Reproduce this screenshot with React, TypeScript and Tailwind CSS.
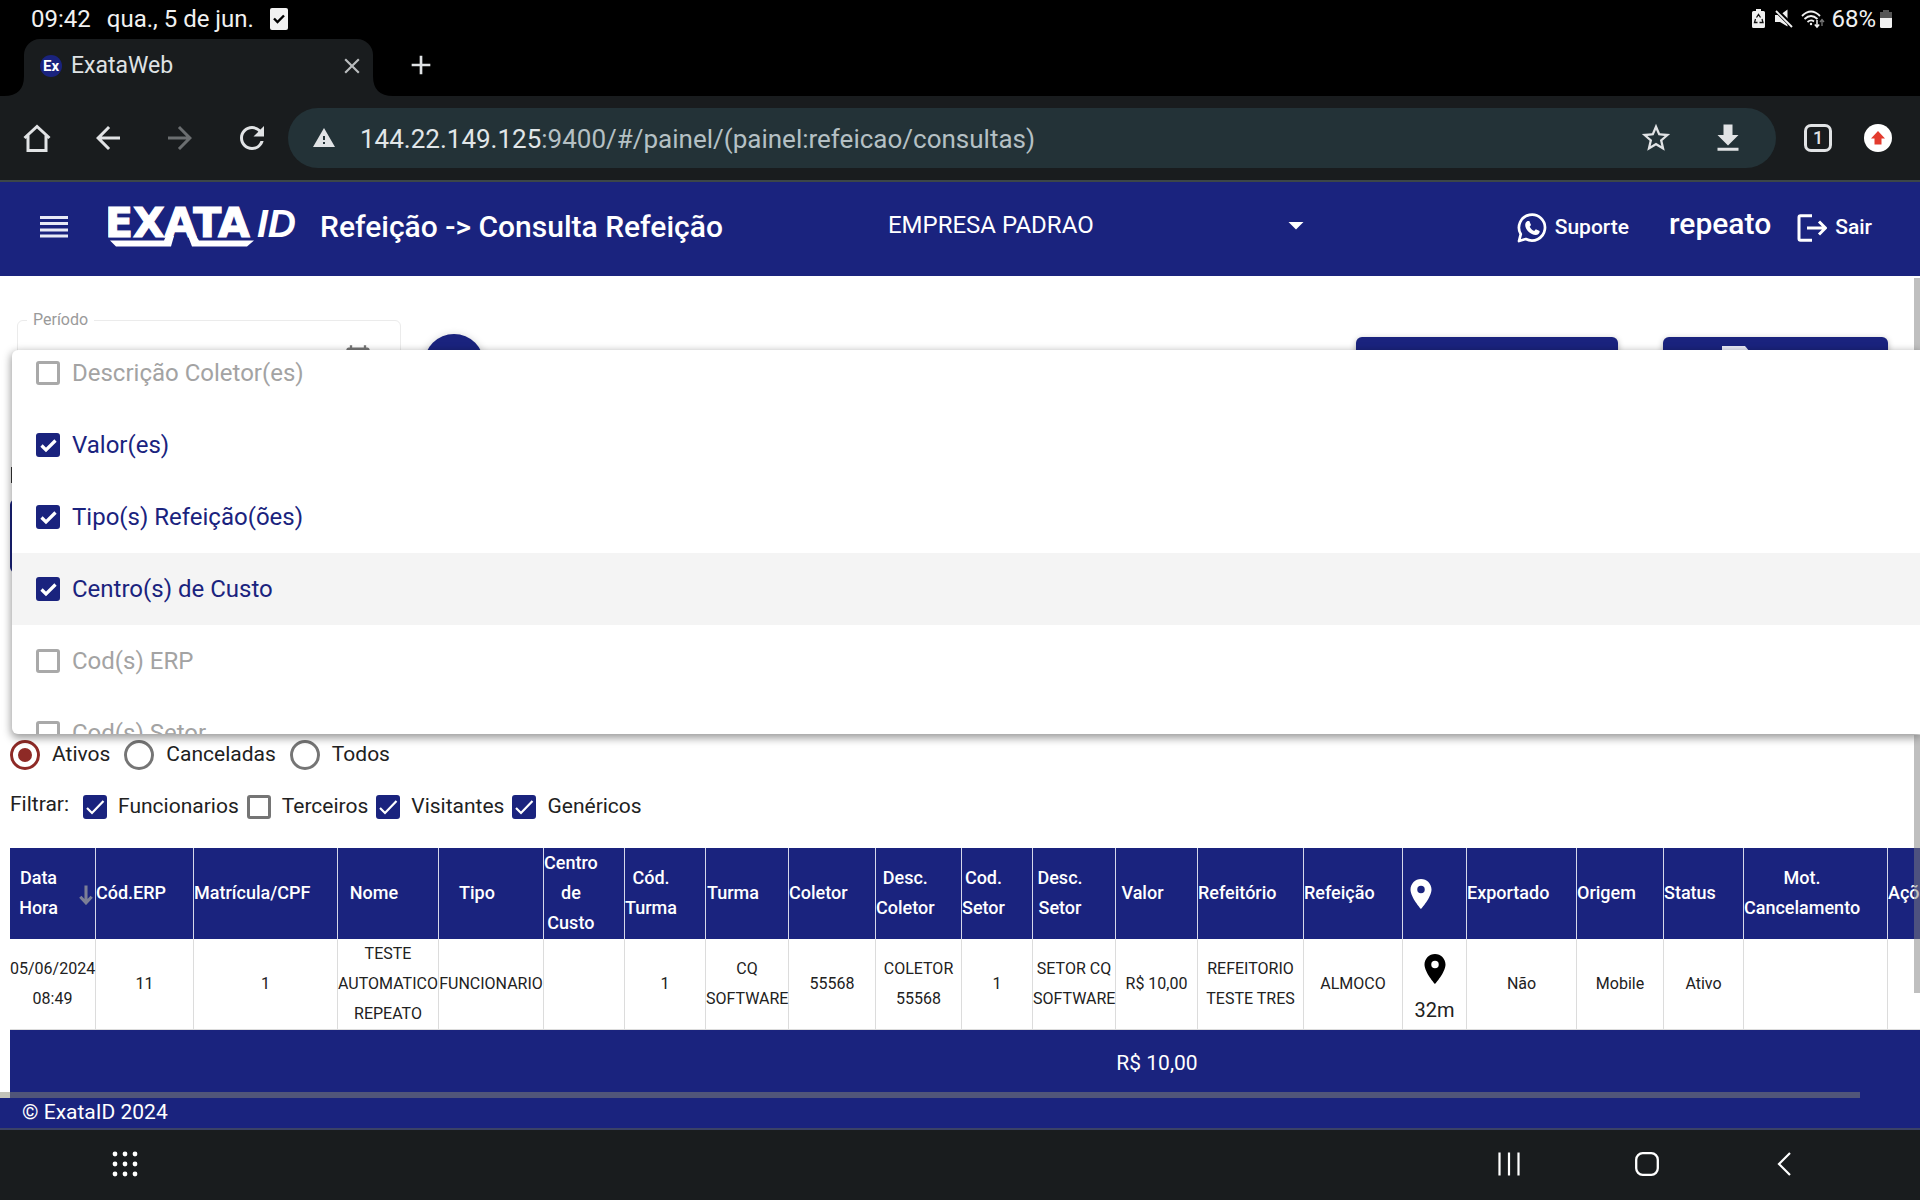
import React from "react";
import {
  MdArrowBack,
  MdArrowForward,
  MdRefresh,
  MdWarning,
  MdStarBorder,
  MdLocationOn,
  MdClose,
  MdAdd,
  MdArrowDropDown,
  MdCalendarToday,
} from "react-icons/md";

function StatusBar() {
  return (
    <div className="flex h-[39px] items-center bg-black pr-7 pb-[2px] pl-[31px] text-2xl leading-9 text-[#f1f1f1]">
      <span>09:42</span>
      <span className="ml-4">qua., 5 de jun.</span>
      <svg viewBox="0 0 18 22" className="ml-4 h-[22px] w-[18px]" aria-hidden="true">
        <rect width="18" height="22" rx="2" fill="#f1f1f1" />
        <path d="M4 10.5l3.5 3.5L14 7.500" fill="none" stroke="#000" strokeWidth="2.400" />
      </svg>
      <div className="ml-auto flex items-center">
        <svg viewBox="0 0 13 19" className="h-[19px] w-[13px]" aria-hidden="true">
          <path d="M4 0h5v2h2.500Q13 2 13 3.500v14Q13 19 11.500 19h-10Q0 19 0 17.500v-14Q0 2 1.500 2H4z" fill="#f1f1f1" />
          <path d="M4.500 8.500L6.500 5.500L8.500 8.500M10 10l1 3.500H7.500M5.500 13.500H2.500L3.500 10" fill="none" stroke="#111" strokeWidth="1.300" />
        </svg>
        <svg viewBox="0 0 18 19" className="ml-[10px] h-[19px] w-[18px]" aria-hidden="true">
          <path d="M0 6h5L12.500 0.500v17L5 13H0z" fill="#f1f1f1" />
          <path d="M0.500 0.500L17.500 17.500" stroke="#000" strokeWidth="4.500" />
          <path d="M1 2L17 18" stroke="#f1f1f1" strokeWidth="1.900" />
        </svg>
        <svg viewBox="0 0 24 20" className="ml-2 h-5 w-6" fill="none" stroke="#f1f1f1" strokeWidth="1.800" aria-hidden="true">
          <path d="M1 7Q10 -2 19 7M3.500 10Q10 4 16.500 10M6.500 13Q10 10 13 12.500" />
          <circle cx="10" cy="15" r="1.200" fill="#f1f1f1" stroke="none" />
          <path d="M16 11v7M13.800 15.500l2.200 2.500 2.200-2.500" strokeWidth="1.500" />
          <path d="M21 17v-6M19 13l2-2.500 2 2.500" stroke="#777" strokeWidth="1.300" />
        </svg>
        <span className="ml-[6px]">68%</span>
        <svg viewBox="0 0 12 18" className="ml-1 h-[18px] w-3" aria-hidden="true">
          <path d="M3 0h6v2h3v6H0V2h3z" fill="#555" />
          <path d="M0 8h12v8.500Q12 18 10.500 18h-9Q0 18 0 16.500z" fill="#f1f1f1" />
        </svg>
      </div>
    </div>
  );
}

function TabStrip() {
  return (
    <div className="flex h-[57px] bg-black">
      <svg viewBox="0 0 24 57" className="h-[57px] w-6 shrink-0" aria-hidden="true">
        <path d="M24 37Q24 57 4 57H24z" fill="#191c1e" />
      </svg>
      <div className="flex w-[349px] items-center rounded-t-2xl bg-[#191c1e] pr-2 pb-[3px] pl-4 text-[#dfe2e4]">
        <span className="flex size-[22px] items-center justify-center rounded-full bg-[#1a237e] text-[15px] font-bold text-white">Ex</span>
        <span className="ml-[9px] text-[23px]">ExataWeb</span>
        <button aria-label="Fechar guia" className="ml-auto">
          <MdClose className="size-[26px] text-[#b9bcbe]" />
        </button>
      </div>
      <svg viewBox="0 0 20 57" className="h-[57px] w-5 shrink-0" aria-hidden="true">
        <path d="M0 37Q0 57 20 57H0z" fill="#191c1e" />
      </svg>
      <button aria-label="Nova guia" className="ml-3 pb-[6px] text-[#dfe2e4]">
        <MdAdd className="size-8" />
      </button>
    </div>
  );
}

function Toolbar() {
  return (
    <div className="flex h-[86px] items-center border-b-2 border-[#3c4648] bg-[#191c1e] pr-7 pl-5 text-[#e1e3e5]">
      <button aria-label="Página inicial">
        <svg viewBox="0 0 34 34" className="size-[34px]" fill="none" stroke="currentColor" strokeWidth="3" aria-hidden="true">
          <path d="M4.500 17L17 5.500L29.500 17M8 14.500V29.500H26V14.500" />
        </svg>
      </button>
      <button aria-label="Voltar" className="ml-9">
        <MdArrowBack className="size-9" />
      </button>
      <button aria-label="Avançar" className="ml-9 text-[#6b6e70]">
        <MdArrowForward className="size-9" />
      </button>
      <button aria-label="Recarregar" className="ml-9">
        <MdRefresh className="size-9" />
      </button>
      <div className="ml-[18px] flex h-[60px] flex-1 items-center rounded-full bg-[#233237] pr-[30px] pl-6">
        <MdWarning className="size-6 shrink-0" />
        <p className="ml-6 flex-1 pt-[2px] text-[26px] text-[#b5c0c4]">
          <span className="text-[#e1e6e8]">144.22.149.125</span>:9400/#/painel/(painel:refeicao/consultas)
        </p>
        <button aria-label="Adicionar aos favoritos">
          <MdStarBorder className="size-[34px]" />
        </button>
        <button aria-label="Baixar" className="ml-[37px]">
          <svg viewBox="0 0 24 24" className="size-9" fill="currentColor" aria-hidden="true">
            <path d="M19 10h-4V3H9v7H5l7 7 7-7zM5 18.500v2h14v-2z" />
          </svg>
        </button>
      </div>
      <button aria-label="Guias abertas" className="ml-7 flex size-7 items-center justify-center rounded-[7px] border-[3px] border-[#e1e3e5] text-lg leading-5 font-medium">
        1
      </button>
      <button aria-label="Atualização disponível" className="ml-8 flex size-7 items-center justify-center rounded-full bg-white">
        <svg viewBox="0 0 14 14" className="size-[14px]" fill="#e33b2e" aria-hidden="true">
          <path d="M7 0l7 7.500h-3.500V13.500h-7V7.500H0z" />
        </svg>
      </button>
    </div>
  );
}

function Logo() {
  return (
    <svg viewBox="0 0 190 42" className="ml-10 h-[42px] w-[190px] shrink-0" role="img" aria-label="EXATAID">
      <text x="-3" y="31" fill="#fff" stroke="#fff" strokeWidth="1.200" fontFamily="DejaVu Sans" fontWeight="700" fontSize="41">EXATA</text>
      <text x="149" y="31" fill="#fff" fontFamily="Liberation Sans" fontWeight="700" fontStyle="italic" fontSize="39">ID</text>
      <path d="M2 34.500H56L58 30H66L63 40.500H8z" fill="#fff" />
      <path d="M80 30H88L91 34.500H146L139 40.500H84z" fill="#fff" />
    </svg>
  );
}

function AppHeader() {
  return (
    <header className="flex h-[94px] items-center bg-[#1a237e] pr-12 pb-1 pl-10 text-white">
      <button aria-label="Menu">
        <svg viewBox="0 0 28 22" className="h-[22px] w-7" fill="#e8eaf6" aria-hidden="true">
          <path d="M0 0h28v3H0zM0 6h28v3H0zM0 12.500h28v3H0zM0 18.500h28v3H0z" />
        </svg>
      </button>
      <Logo />
      <h1 className="ml-[22px] text-3xl leading-9 font-medium">Refeição -&gt; Consulta Refeição</h1>
      <div className="relative ml-[165px] w-[422px]">
        <select aria-label="Empresa" className="h-9 w-full appearance-none bg-transparent pb-1 text-2xl text-white">
          <option>EMPRESA PADRAO</option>
        </select>
        <MdArrowDropDown className="pointer-events-none absolute -top-0.5 -right-1 size-9" />
      </div>
      <a href="#suporte" className="ml-auto flex items-center pt-[2px] text-[21px] font-medium">
        <svg viewBox="0 0 30 30" className="size-[30px]" aria-hidden="true">
          <path d="M2 28l1.800-6.800A13 13 0 1 1 8.800 26z" fill="none" stroke="#fff" strokeWidth="2.700" strokeLinejoin="round" />
          <path d="M10.500 8h1.800l1.700 4-1.300 1.800c1 2 2.300 3.200 4.500 4.200l1.600-1.800 3.900 1.900c0 2.500-1.800 3.900-4 3.900-5 0-10.500-5.500-10.500-10 0-1.700.9-3.300 2.300-4z" fill="#fff" />
        </svg>
        <span className="ml-2">Suporte</span>
      </a>
      <span className="ml-10 pb-[6px] text-3xl leading-9 font-medium">repeato</span>
      <a href="#sair" className="ml-[26px] flex items-center pt-[2px] text-[21px] font-medium">
        <svg viewBox="0 0 30 28" className="h-7 w-[30px]" fill="none" stroke="#fff" strokeWidth="3" aria-hidden="true">
          <path d="M15 1.800H3.500Q2 1.800 2 3.300V24.700Q2 26.200 3.500 26.200H15M10 14H28M22 7.500L28.500 14L22 20.500" />
        </svg>
        <span className="ml-2">Sair</span>
      </a>
    </header>
  );
}

const options = [
  { label: "Descrição Coletor(es)", checked: false },
  { label: "Valor(es)", checked: true },
  { label: "Tipo(s) Refeição(ões)", checked: true },
  { label: "Centro(s) de Custo", checked: true, active: true },
  { label: "Cod(s) ERP", checked: false },
  { label: "Cod(s) Setor", checked: false },
];

function ColumnPicker() {
  return (
    <div className="absolute top-[74px] right-0 left-3 flex h-96 flex-col overflow-hidden rounded-l-md bg-white shadow-[0_3px_8px_1px_rgba(0,0,0,0.4)]">
      <div className="-mt-[13px]">
        {options.map((o) => (
          <label
            key={o.label}
            className={`flex h-[72px] items-center pl-6 text-2xl ${o.active ? "bg-[#f4f4f4]" : ""} ${o.checked ? "text-[#1a237e]" : "text-[#a3a3a3]"}`}
          >
            <span className="relative flex size-6">
              <input
                type="checkbox"
                defaultChecked={o.checked}
                className="peer size-6 appearance-none rounded-[3px] border-[3px] border-[#a9a9a9] checked:border-[#1a237e] checked:bg-[#1a237e]"
              />
              <svg viewBox="0 0 24 24" className="pointer-events-none absolute inset-0 hidden peer-checked:block" aria-hidden="true">
                <path d="M5.500 12.500l4.500 4.500L19.500 7.500" fill="none" stroke="#fff" strokeWidth="3.200" />
              </svg>
            </span>
            <span className="ml-3">{o.label}</span>
          </label>
        ))}
      </div>
    </div>
  );
}

function Status({ label, checked = false }: { label: string; checked?: boolean }) {
  return (
    <label className="flex items-center">
      <span className="relative flex size-[30px]">
        <input
          type="radio"
          name="status"
          defaultChecked={checked}
          className="peer size-[30px] appearance-none rounded-full border-[3px] border-[#757575] checked:border-[#8e2a26]"
        />
        <span className="pointer-events-none absolute inset-2 hidden rounded-full bg-[#8e2a26] peer-checked:block" />
      </span>
      <span className="ml-3 pb-[2px]">{label}</span>
    </label>
  );
}

function Filter({ label, checked = false }: { label: string; checked?: boolean }) {
  return (
    <label className="flex items-center">
      <span className="relative flex size-6">
        <input
          type="checkbox"
          defaultChecked={checked}
          className="peer size-6 appearance-none rounded-[3px] border-[3px] border-[#757575] checked:border-[#1a237e] checked:bg-[#1a237e]"
        />
        <svg viewBox="0 0 24 24" className="pointer-events-none absolute inset-0 hidden peer-checked:block" aria-hidden="true">
          <path d="M4 13l5 5L20.500 6" fill="none" stroke="#fff" strokeWidth="2.200" />
        </svg>
      </span>
      <span className="ml-[11px] pb-[2px]">{label}</span>
    </label>
  );
}

const columns: { w: number; head: string[]; cell: string[]; total?: string }[] = [
  { w: 86, head: ["Data", "Hora"], cell: ["05/06/2024", "08:49"] },
  { w: 98, head: ["Cód.ERP"], cell: ["11"] },
  { w: 144, head: ["Matrícula/CPF"], cell: ["1"] },
  { w: 101, head: ["Nome"], cell: ["TESTE", "AUTOMATICO", "REPEATO"] },
  { w: 105, head: ["Tipo"], cell: ["FUNCIONARIO"] },
  { w: 81, head: ["Centro", "de", "Custo"], cell: [] },
  { w: 81, head: ["Cód.", "Turma"], cell: ["1"] },
  { w: 83, head: ["Turma"], cell: ["CQ", "SOFTWARE"] },
  { w: 87, head: ["Coletor"], cell: ["55568"] },
  { w: 86, head: ["Desc.", "Coletor"], cell: ["COLETOR", "55568"] },
  { w: 71, head: ["Cod.", "Setor"], cell: ["1"] },
  { w: 83, head: ["Desc.", "Setor"], cell: ["SETOR CQ", "SOFTWARE"] },
  { w: 82, head: ["Valor"], cell: ["R$ 10,00"], total: "R$ 10,00" },
  { w: 106, head: ["Refeitório"], cell: ["REFEITORIO", "TESTE TRES"] },
  { w: 99, head: ["Refeição"], cell: ["ALMOCO"] },
  { w: 64, head: ["pin"], cell: ["32m"] },
  { w: 110, head: ["Exportado"], cell: ["Não"] },
  { w: 87, head: ["Origem"], cell: ["Mobile"] },
  { w: 80, head: ["Status"], cell: ["Ativo"] },
  { w: 144, head: ["Mot.", "Cancelamento"], cell: [] },
  { w: 78, head: ["Ações"], cell: [] },
];

function Lines({ items }: { items: string[] }) {
  return (
    <>
      {items.map((t) => (
        <span key={t} className="block whitespace-nowrap">
          {t}
        </span>
      ))}
    </>
  );
}

function MealsTable() {
  return (
    <div className="mt-7 ml-[10px] overflow-hidden">
      <table className="w-[1956px] table-fixed border-separate border-spacing-0 text-center">
        <colgroup>
          {columns.map((c) => (
            <col key={c.head.join()} style={{ width: c.w }} />
          ))}
        </colgroup>
        <thead>
          <tr className="h-[91px] bg-[#1a237e] text-lg leading-[30px] font-medium text-white">
            {columns.map((c, i) => (
              <th key={c.head.join()} scope="col" className="border-r border-[#d5d7ea] p-0 font-medium">
                {c.head[0] === "pin" ? (
                  <MdLocationOn className="size-9" title="Localização" />
                ) : (
                  <div className="-mt-[2px] flex items-center">
                    <div className={i === 0 ? "flex-1" : "flex-1 pr-7"}>
                      <Lines items={c.head} />
                    </div>
                    {i === 0 && (
                      <svg viewBox="0 0 16 22" className="mt-1 mr-[2px] ml-3 h-5 w-[14px]" fill="none" stroke="#7c7f96" strokeWidth="3.500" aria-hidden="true">
                        <path d="M8 0V20M1.500 13L8 20L14.500 13" />
                      </svg>
                    )}
                  </div>
                )}
              </th>
            ))}
          </tr>
        </thead>
        <tbody>
          <tr className="h-[91px] text-base leading-[30px] text-[#212121]">
            {columns.map((c) => (
              <td key={c.head.join()} className="border-r border-b border-[#dcdcdc] p-0">
                {c.head[0] === "pin" ? (
                  <div className="flex flex-col items-center pt-2 text-xl leading-[30px]">
                    <MdLocationOn className="size-9 text-black" />
                    <span className="mt-2">32m</span>
                  </div>
                ) : (
                  <Lines items={c.cell} />
                )}
              </td>
            ))}
          </tr>
        </tbody>
        <tfoot>
          <tr className="h-[68px] bg-[#1a237e] text-[21px] text-white">
            {columns.map((c) => (
              <td key={c.head.join()} className="p-0 whitespace-nowrap">
                {c.total}
              </td>
            ))}
          </tr>
        </tfoot>
      </table>
    </div>
  );
}

export default function App() {
  return (
    <div className="flex min-h-screen flex-col overflow-hidden bg-white font-['Roboto',sans-serif]">
      <StatusBar />
      <TabStrip />
      <Toolbar />
      <AppHeader />
      <main className="relative flex-1 overflow-hidden pt-11">
        <div className="flex h-[88px] items-center pr-8 pl-[17px]">
          <fieldset className="flex h-[104px] w-96 items-start justify-end rounded-md border border-[#ebebeb] pt-4 pr-7">
            <legend className="ml-[9px] px-[6px] text-base leading-4 text-[#9a9a9a]">Período</legend>
            <button aria-label="Abrir calendário">
              <MdCalendarToday className="size-7 text-[#757575]" />
            </button>
          </fieldset>
          <button aria-label="Pesquisar" className="ml-[23px] size-[60px] rounded-full bg-[#1a237e] shadow-[0_3px_10px_rgba(0,0,0,0.3)]" />
          <button aria-label="Imprimir" className="ml-auto h-[54px] w-[262px] rounded-md bg-[#1a237e] shadow-[0_2px_6px_rgba(0,0,0,0.3)]" />
          <button aria-label="Exportar" className="ml-[45px] flex h-[54px] w-[225px] rounded-md bg-[#1a237e] pt-[9px] pl-[59px] shadow-[0_2px_6px_rgba(0,0,0,0.3)]">
            <svg viewBox="0 0 28 32" className="h-8 w-7" fill="#e8eaf6" aria-hidden="true">
              <path d="M0 0H23L28 6V32H0z" />
            </svg>
          </button>
        </div>
        <div className="mt-[59px] ml-[11px] h-4 w-px bg-[#333]" />
        <div className="mt-4 mr-4 ml-[10px] h-[74px] rounded-md border-2 border-[#1a237e]" />
        <div className="mt-[167px] flex h-[30px] items-center gap-[14px] pl-[10px] text-[21px] leading-7 text-[#212121]">
          <Status label="Ativos" checked />
          <Status label="Canceladas" />
          <Status label="Todos" />
        </div>
        <div className="mt-6 flex h-[26px] items-center gap-2 pl-[10px] text-[21px] leading-6 text-[#212121]">
          <span className="mr-[6px] pb-[6px]">Filtrar:</span>
          <Filter label="Funcionarios" checked />
          <Filter label="Terceiros" />
          <Filter label="Visitantes" checked />
          <Filter label="Genéricos" checked />
        </div>
        <MealsTable />
        <ColumnPicker />
        <div className="absolute top-[2px] right-0 h-[72px] w-[6px] bg-black/25" />
        <div className="absolute top-[459px] right-0 h-[258px] w-[6px] bg-[#808080]/50" />
        <div className="absolute right-[60px] bottom-0 left-0 h-[6px] bg-[#878773]/50" />
      </main>
      <footer className="h-8 border-b-2 border-[#3b4266] bg-[#1a237e] pl-[22px] text-[21px] leading-7 text-white">© ExataID 2024</footer>
      <nav aria-label="Sistema" className="flex h-[70px] items-center bg-[#191c1e] pr-[129px] pb-[2px] pl-28 text-white">
        <button aria-label="Aplicativos">
          <svg viewBox="0 0 26 26" className="size-[26px]" fill="#fff" aria-hidden="true">
            {[3, 13, 23].map((y) => [3, 13, 23].map((x) => <circle key={`${x}-${y}`} cx={x} cy={y} r="2.400" />))}
          </svg>
        </button>
        <button aria-label="Recentes" className="ml-auto">
          <svg viewBox="0 0 24 24" className="size-6" stroke="#fff" strokeWidth="2.200" aria-hidden="true">
            <path d="M2.500 0.500V23.500M12 0.500V23.500M21.500 0.500V23.500" />
          </svg>
        </button>
        <button aria-label="Início" className="ml-[114px]">
          <svg viewBox="0 0 24 24" className="size-6" fill="none" stroke="#fff" strokeWidth="2.300" aria-hidden="true">
            <rect x="1.200" y="1.200" width="21.600" height="21.600" rx="6.500" />
          </svg>
        </button>
        <button aria-label="Voltar ao anterior" className="ml-[118px]">
          <svg viewBox="0 0 14 24" className="h-6 w-[14px]" fill="none" stroke="#fff" strokeWidth="2.200" aria-hidden="true">
            <path d="M13 1L2 12L13 23" />
          </svg>
        </button>
      </nav>
    </div>
  );
}
